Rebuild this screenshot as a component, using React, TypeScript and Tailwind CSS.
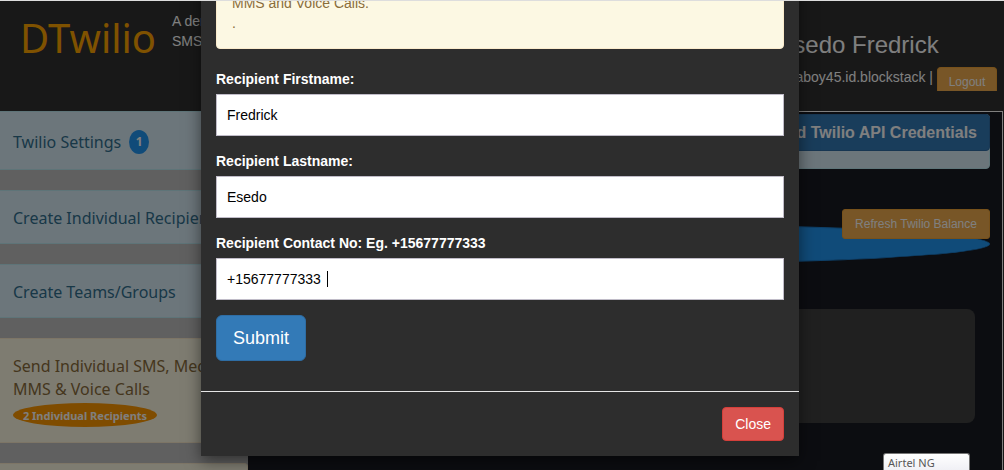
import { useState, type ReactNode } from 'react';

interface FieldProps {
  id: string;
  label: string;
  value: string;
  onChange: (value: string) => void;
  active?: boolean;
}

function Field({ id, label, value, onChange, active }: FieldProps) {
  return (
    <div className="mb-[15px]">
      <label htmlFor={id} className="mb-[5px] block font-bold text-white">
        {label}
      </label>
      <div className="relative">
        <input
          id={id}
          type="text"
          value={value}
          onChange={(e) => onChange(e.target.value)}
          className="block h-[42px] w-full border border-[#c0bcc8] bg-white px-[10px] text-black outline-none"
        />
        {active && <span className="absolute top-[13px] left-[111px] h-4 w-px bg-black" />}
      </div>
    </div>
  );
}

interface MenuItemProps {
  tone: 'info' | 'warning';
  children?: ReactNode;
}

function MenuItem({ tone, children }: MenuItemProps) {
  const colors =
    tone === 'info'
      ? 'border-[#bce8f1] bg-[#d9edf7] text-[#31708f]'
      : 'border-[#faebcc] bg-[#fcf8e3] text-[#8a6d3b]';

  return (
    <a
      href="#"
      className={`mb-5 block shrink-0 rounded-r border border-l-0 pt-4 pb-[13px] pl-[13px] font-['Comic_Sans_MS','Noto_Sans',sans-serif] text-base leading-[23px] whitespace-nowrap ${colors}`}
    >
      {children}
    </a>
  );
}

function Header() {
  return (
    <header className="flex h-[111px] shrink-0 justify-between bg-[#303030] pr-[7px] pl-5 text-white">
      <div className="flex">
        <div className="w-[152px] pt-4 font-['Comic_Sans_MS','Noto_Sans',sans-serif] text-[40px] leading-[44px] text-[#ffa500]">
          DTwilio
        </div>
        <p className="pt-[11px]">
          A demo
          <br />
          SMS
        </p>
      </div>
      <div className="w-[278px] pt-[30px] text-center">
        <h3 className="text-2xl leading-[30px]">Esedo Fredrick</h3>
        <div className="flex justify-end gap-1 pt-[7px]">
          <span>aboy45.id.blockstack |</span>
          <button type="button" className="h-6 w-[60px] rounded-t border border-b-0 border-[#eea236] bg-[#f0ad4e] pt-[5px] text-xs">
            Logout
          </button>
        </div>
      </div>
    </header>
  );
}

function Sidebar() {
  return (
    <nav className="flex w-[248px] shrink-0 flex-col overflow-hidden bg-[#c0c0c0]">
      <MenuItem tone="info">
        <span className="flex items-center gap-2 py-[2px]">
          Twilio Settings
          <span className="flex h-6 w-5 items-center justify-center rounded-[50%] bg-[#2196f3] text-xs font-bold text-white">
            1
          </span>
        </span>
      </MenuItem>
      <MenuItem tone="info">Create Individual Recipients</MenuItem>
      <MenuItem tone="info">Create Teams/Groups</MenuItem>
      <MenuItem tone="warning">
        Send Individual SMS, Media
        <br />
        MMS &amp; Voice Calls
        <span className="my-[2px] flex h-6 w-36 items-center justify-center rounded-[50%] bg-[#ff9800] text-[11px] font-bold text-white">
          2 Individual Recipients
        </span>
      </MenuItem>
      <MenuItem tone="warning" />
    </nav>
  );
}

function Content() {
  return (
    <main className="mr-px flex-1 border-t border-r border-white bg-[#191b23] pt-[2px] pr-3 pl-[15px]">
      <div className="h-[55px] rounded border border-[#bce8f1] bg-[#d9edf7]">
        <button
          type="button"
          className="-mx-px -mt-px ml-auto block h-[37px] rounded border border-[#2e6da4] bg-[#337ab7] px-3 text-base font-bold text-white"
        >
          Add Twilio API Credentials
        </button>
      </div>
      <div className="relative mt-[55px] h-10 rounded-[50%] border border-[#1b7fd0] bg-[#2196f3]">
        <button
          type="button"
          className="absolute -top-4 -right-px h-[30px] w-[148px] rounded-[3px] border border-[#eea236] bg-[#f0ad4e] text-xs whitespace-nowrap text-white"
        >
          Refresh Twilio Balance
        </button>
      </div>
      <div className="mt-[45px] mr-[15px] h-[114px] rounded-lg bg-[#404040]" />
    </main>
  );
}

function RecipientModal() {
  const [firstname, setFirstname] = useState('Fredrick');
  const [lastname, setLastname] = useState('Esedo');
  const [contact, setContact] = useState('+15677777333 ');

  return (
    <div className="absolute inset-0 flex items-start justify-center overflow-hidden bg-black/50 pr-1">
      <div role="dialog" aria-label="Create recipient" className="-mt-[38px] w-full max-w-[598px] bg-[#2d2d2d] shadow-[0_5px_15px_rgba(0,0,0,0.5)]">
        <form className="p-[15px]" onSubmit={(e) => e.preventDefault()}>
          <div className="mb-5 rounded border border-[#faebcc] bg-[#fcf8e3] p-[15px] text-[#8a6d3b]">
            MMS and Voice Calls.
            <br />.
          </div>
          <Field id="firstname" label="Recipient Firstname:" value={firstname} onChange={setFirstname} />
          <Field id="lastname" label="Recipient Lastname:" value={lastname} onChange={setLastname} />
          <Field
            id="contact"
            label="Recipient Contact No: Eg. +15677777333"
            value={contact}
            onChange={setContact}
            active
          />
          <button type="submit" className="mb-[15px] block h-[46px] rounded-md border border-[#2e6da4] bg-[#337ab7] px-4 text-lg text-white">
            Submit
          </button>
        </form>
        <div className="flex justify-end border-t border-[#e5e5e5] p-[15px]">
          <button type="button" className="h-[34px] rounded border border-[#d43f3a] bg-[#d9534f] px-3 text-white">
            Close
          </button>
        </div>
      </div>
    </div>
  );
}

export default function App() {
  return (
    <div className="relative flex h-screen flex-col overflow-hidden bg-[#303030] font-['Liberation_Sans',Arial,sans-serif] text-sm leading-5">
      <Header />
      <div className="flex min-h-0 flex-1">
        <Sidebar />
        <Content />
      </div>
      <RecipientModal />
      <div className="absolute inset-x-0 top-0 h-px bg-[#dddddd]" />
      <div className="absolute right-[34px] bottom-0 h-[17px] w-[87px] rounded-t-[3px] border border-b-0 border-[#767676] bg-linear-to-b from-white to-[#f0f0f5] pl-1 font-['Noto_Sans',sans-serif] text-[11px] leading-[18px] text-[#575757]">
        Airtel NG
      </div>
    </div>
  );
}
